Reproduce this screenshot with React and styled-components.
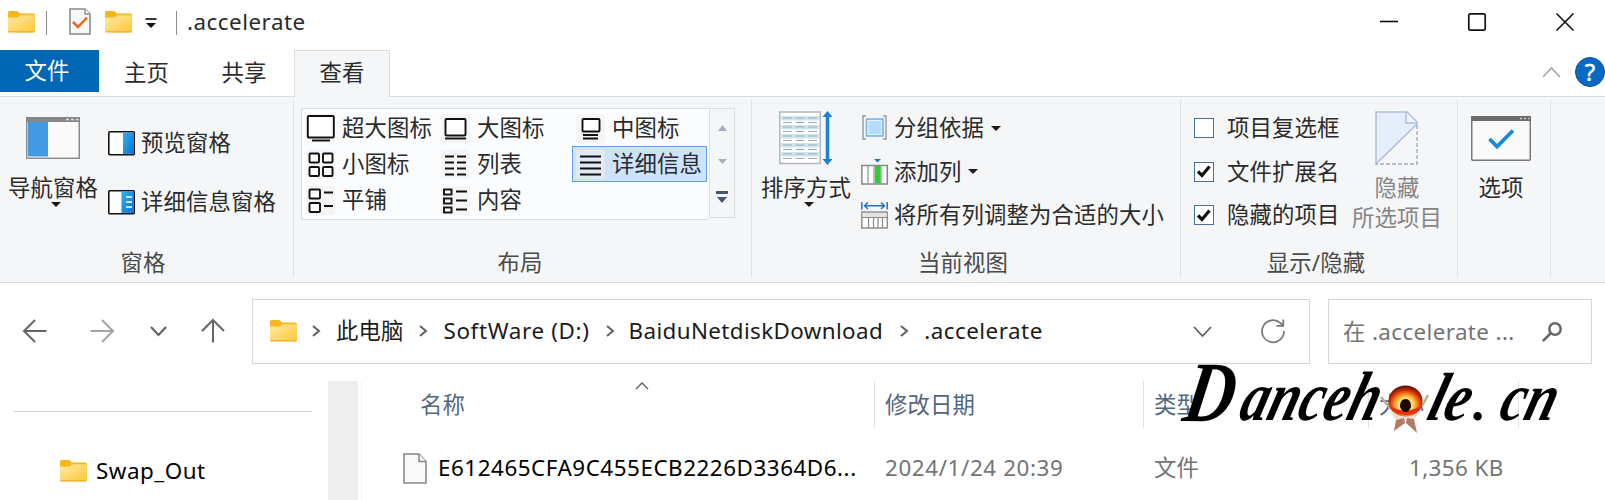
import React from 'react';
import styled, { createGlobalStyle } from 'styled-components';

const GlobalStyle = createGlobalStyle`
  * { box-sizing: border-box; }
  body { margin: 0; background: #fff; overflow: hidden; }
  svg { display: block; flex: none; overflow: visible; }
`;

const Window = styled.div`
  width: 1605px;
  height: 500px;
  overflow: hidden;
  background: #fff;
  color: #2b2b2b;
  font: 22.4px/26px 'Noto Sans', 'Noto Sans CJK SC', sans-serif;
  letter-spacing: 0.1px;
  white-space: nowrap;
`;

const Text = styled.span`
  display: block;
  flex: none;
  height: 26px;
  margin-left: ${(p) => p.$ml || 0}px;
  margin-top: ${(p) => p.$mt || 0}px;
  color: ${(p) => p.$color || 'inherit'};
  letter-spacing: ${(p) => p.$ls || 0.1}px;
`;

/* title bar */
const TitleBar = styled.header`
  display: flex;
  align-items: center;
  height: 50px;
  padding: 0 31px 7px 8px;
`;
const TitleDivider = styled.i`
  width: 1px;
  height: 24px;
  margin: 2px 0 0 ${(p) => p.$ml}px;
  background: #8b8b8b;
`;
const Controls = styled.div`
  display: flex;
  align-items: center;
  gap: 70px;
  margin-left: auto;
`;

/* tabs */
const Tabs = styled.nav`
  display: flex;
  height: 47px;
  border-bottom: 1px solid #dadcde;
`;
const Tab = styled.div`
  display: flex;
  justify-content: center;
  width: ${(p) => p.$w}px;
  height: 47px;
  padding-top: 9px;
  padding-right: ${(p) => (p.$active ? 0 : 2)}px;
  border: 1px solid ${(p) => (p.$active ? '#dadcde' : 'transparent')};
  border-bottom: 0;
  background: ${(p) => (p.$active ? '#f5f6f8' : 'transparent')};
`;
const FileTab = styled(Tab)`
  height: 42px;
  padding-top: 8px;
  border: 0;
  background: #0067b5;
  color: #fff;
`;
const TabTools = styled.div`
  display: flex;
  align-items: center;
  gap: 14px;
  height: 44px;
  margin-left: auto;
`;

/* ribbon */
const Ribbon = styled.section`
  display: flex;
  height: 186px;
  padding-top: 3px;
  background: #f5f6f8;
  border-bottom: 1px solid #d9dbdd;
`;
const Group = styled.div`
  display: flex;
  flex-direction: column;
  width: ${(p) => p.$w}px;
  height: 177px;
  border-right: 1px solid #dfe1e3;
`;
const GroupBody = styled.div`
  display: flex;
  height: 150px;
  padding-left: ${(p) => p.$pl || 0}px;
`;
const GroupLabel = styled.div`
  height: 26px;
  padding-right: ${(p) => p.$pr || 0}px;
  text-align: center;
  color: #4a4a4a;
`;
const BigButton = styled.div`
  display: flex;
  flex-direction: column;
  align-items: center;
  width: ${(p) => p.$w}px;
  padding-top: ${(p) => p.$pt}px;
  color: ${(p) => p.$color || 'inherit'};
`;
const IconSlot = styled.div`
  display: flex;
  justify-content: center;
  height: ${(p) => p.$h}px;
`;
const List = styled.div`
  display: flex;
  flex-direction: column;
  gap: ${(p) => p.$gap}px;
  padding: ${(p) => p.$pad};
`;
const Row = styled.div`
  display: flex;
  align-items: center;
  height: 26px;
  gap: ${(p) => p.$gap || 6}px;
`;
const Caret = styled.i`
  width: 0;
  height: 0;
  margin-left: 1px;
  border: 5px solid transparent;
  border-top: 5px solid #1b1b1b;
  border-bottom: 0;
`;
const ButtonCaret = styled(Caret)`
  margin: 1px 0 0 6px;
`;
const CheckBox = styled.div`
  display: grid;
  place-items: center;
  width: 20px;
  height: 20px;
  border: 1px solid #4f6ba3;
  background: #fff;
`;

/* layout gallery */
const Gallery = styled.div`
  display: flex;
  height: 112px;
  margin-top: 8px;
`;
const GalleryGrid = styled.div`
  display: grid;
  grid-template-columns: repeat(3, 135px);
  grid-auto-rows: 36px;
  width: 408px;
  padding-top: 1px;
  border: 1px solid #dcdee0;
  border-right: 0;
  background: #fbfcfe;
`;
const GalleryItem = styled.div`
  display: flex;
  align-items: center;
  gap: 7px;
  height: 36px;
  padding-left: 3px;
  border: 1px solid ${(p) => (p.$selected ? '#62a2e4' : 'transparent')};
  background: ${(p) => (p.$selected ? '#cde3fb' : 'transparent')};
`;
const IconTile = styled.div`
  flex: none;
  width: 29px;
  height: 29px;
  border-radius: 2px;
  background: ${(p) => (p.$selected ? '#e1e9f5' : '#f4f5f6')};
`;
const GalleryScroll = styled.div`
  display: flex;
  flex-direction: column;
  align-items: center;
  justify-content: space-between;
  width: 26px;
  height: 110px;
  padding: 16px 0 14px;
  border: 1px solid #dcdee0;
`;

/* address row */
const AddressRow = styled.div`
  display: flex;
  align-items: flex-start;
  height: 98px;
  padding: 16px 0 0 23px;
`;
const NavIcons = styled.div`
  display: flex;
  flex: none;
  align-items: center;
  width: 229px;
  height: 64px;
`;
const NavSlot = styled.div`
  margin-left: ${(p) => p.$ml || 0}px;
`;
const Field = styled.div`
  display: flex;
  flex: none;
  align-items: center;
  width: ${(p) => p.$w}px;
  height: 65px;
  margin-right: 18px;
  padding: 0 ${(p) => p.$pr}px ${(p) => p.$pb || 0}px ${(p) => p.$pl}px;
  border: 1px solid #d5d5d5;
`;
const Push = styled.div`
  display: flex;
  align-items: center;
  gap: 49px;
  margin-left: auto;
`;

/* content */
const Content = styled.main`
  display: flex;
  height: 119px;
`;
const Sidebar = styled.aside`
  width: 328px;
  padding: 30px 16px 0 14px;
`;
const Rule = styled.div`
  height: 1px;
  background: #d4d4d4;
`;
const TreeRow = styled.div`
  display: flex;
  align-items: center;
  height: 26px;
  padding-left: 46px;
  margin-top: 46px;
  color: #000;
`;
const Track = styled.div`
  width: 34px;
  border-right: 1px solid #f4f4f4;
  background: linear-gradient(to right, #eee 30px, #fff 30px);
`;
const Files = styled.div`
  width: 1243px;
`;
const Columns = styled.div`
  display: grid;
  grid-template-columns: 513px 269px 225px 150px;
  height: 47px;
  color: #51667f;
`;
const Column = styled.div`
  position: relative;
  padding: 11px 0 0 ${(p) => p.$pl || 10}px;
  border-right: 1px solid #e2e2e2;
`;
const SortMark = styled.div`
  position: absolute;
  left: 273px;
  top: 1px;
`;
const FileRow = styled.div`
  display: grid;
  grid-template-columns: 76px 447px 269px 248px 100px;
  align-items: center;
  height: 32px;
  margin-top: 24px;
  color: #747474;
`;
const FileIconCell = styled.div`
  padding-left: 41px;
`;
const Watermark = styled.div`
  position: absolute;
  left: 1170px;
  top: 358px;
`;

const Folder = ({ id }) => (
  <svg width="27" height="22" viewBox="0 0 27 22">
    <defs>
      <linearGradient id={id} x1="0" y1="0" x2="1" y2="1">
        <stop offset="0" stopColor="#ffe9a4" />
        <stop offset="1" stopColor="#fdc836" />
      </linearGradient>
    </defs>
    <path d="M0 1.500Q0 0 1.500 0H8.500Q9.500 0 10.200 .8L12 2.500H25.500Q27 2.500 27 4V10H0Z" fill="#f8b51c" />
    <path d="M0 6.500H9Q10.200 6.500 11 5.500L12 4.200H27V20Q27 21.500 25.500 21.500H1.500Q0 21.500 0 20Z" fill={`url(#${id})`} />
    <path d="M.5 20.800H26.500" stroke="#e9af34" strokeWidth="1.200" />
  </svg>
);

const CheckedDoc = () => (
  <svg width="22" height="27" viewBox="0 0 22 27">
    <path d="M1 1H16L21 6V26H1Z" fill="#f7f8fa" stroke="#8b8b8b" strokeWidth="1.600" />
    <path d="M16 1V6H21" fill="#fff" stroke="#8b8b8b" strokeWidth="1.300" />
    <path d="M4 14L9 19L18 9.500" fill="none" stroke="#f4611c" strokeWidth="2.500" />
  </svg>
);

const WindowPane = () => (
  <svg width="54" height="42" viewBox="0 0 54 42">
    <rect x=".75" y=".75" width="52.500" height="40.500" fill="#fafafa" stroke="#8a8d90" strokeWidth="1.500" />
    <rect width="54" height="5" fill="#85888a" />
    <path d="M40 2.500h3M45 2.500h3M50 2.500h2.500" stroke="#ddd" strokeWidth="1.500" />
    <rect x="2" y="5" width="20" height="34.500" fill="#429be2" />
  </svg>
);

const PaneIcon = ({ details }) => (
  <svg width="27" height="25" viewBox="0 0 27 25">
    <defs>
      <linearGradient id="paneBlue" x1="0" y1="0" x2="1" y2="1">
        <stop offset="0" stopColor="#2cb0ed" />
        <stop offset="1" stopColor="#0774d4" />
      </linearGradient>
    </defs>
    <rect x=".8" y=".8" width="25.400" height="22.900" rx="1" fill="#fff" stroke="#111" strokeWidth="1.600" />
    <rect x={details ? 13.5 : 15} y="1.600" width={details ? 12 : 10.500} height="21.300" fill="url(#paneBlue)" />
    {details && <path d="M18 7h6M18 12h6M18 17h6" stroke="#fff" strokeWidth="1.400" />}
  </svg>
);

const layoutArt = {
  xl: <><rect x="1.800" y="2" width="26" height="21.500" rx="1" fill="#fff" /><path d="M6 26.500H24" /></>,
  large: <><rect x="4.500" y="5" width="20" height="16.500" rx="1" fill="#fff" /><path d="M4 24.500H25" /></>,
  medium: <><rect x="6.500" y="5" width="17" height="12.500" rx="1" fill="#fff" /><path d="M7 21H22M7 24.500H22" /></>,
  small: <><rect x="3.500" y="3.500" width="9.500" height="9" rx="1" fill="#fff" /><rect x="17" y="3.500" width="9.500" height="9" rx="1" fill="#fff" /><rect x="3.500" y="17" width="9.500" height="9" rx="1" fill="#fff" /><rect x="17" y="17" width="9.500" height="9" rx="1" fill="#fff" /></>,
  list: <path d="M4 6.500h9M16 6.500h9M4 12.500h9M16 12.500h9M4 18.500h9M16 18.500h9M4 24.500h9M16 24.500h9" />,
  details: <path d="M4 6.500h21M4 12.500h21M4 18.500h21M4 24.500h21" />,
  tiles: <><rect x="3.500" y="3.500" width="10.500" height="9" rx="1" fill="#fff" /><rect x="3.500" y="17" width="10.500" height="9" rx="1" fill="#fff" /><path d="M18 6.500h9M18 20h9" /></>,
  content: <><rect x="3" y="3.500" width="7.500" height="5" fill="#fff" /><rect x="3" y="12.500" width="7.500" height="5" fill="#fff" /><rect x="3" y="21.500" width="7.500" height="5" fill="#fff" /><path d="M15 5.500h11M15 14.500h11M15 23.500h11" /></>,
};

const LayoutIcon = ({ kind }) => (
  <svg width="29" height="29" viewBox="0 0 29 29" fill="none" stroke="#111" strokeWidth="1.900">
    {layoutArt[kind]}
  </svg>
);

const SortIcon = () => (
  <svg width="54" height="54" viewBox="0 0 54 54">
    <rect x=".75" y="1" width="40.500" height="51.500" fill="#fff" stroke="#b3b7ba" strokeWidth="1.500" />
    {[5, 14, 23, 32, 41].map((y) => <rect key={y} x="2" y={y} width="38" height="4.500" fill="#cbe5f3" />)}
    {[7, 11.5, 16, 20.5, 25, 29.5, 34, 38.5, 43, 47.5].map((y) => (
      <path key={y} d={`M4 ${y}h9M16.500 ${y}h9M29 ${y}h9`} stroke="#a9acae" strokeWidth="1.200" />
    ))}
    <path d="M48.500 4V50" stroke="#1d80d3" strokeWidth="3.500" />
    <path d="M43.500 6L48.500 0L53.500 6ZM43.500 48L48.500 54L53.500 48Z" fill="#1d80d3" />
  </svg>
);

const GroupByIcon = () => (
  <svg width="27" height="26" viewBox="0 0 27 26">
    <path d="M5 1H2V24H5M22 1H25V24H22" fill="none" stroke="#96999c" strokeWidth="1.400" />
    <rect x="5.500" y="4" width="16.500" height="17" fill="#b6dcfb" stroke="#78b3e3" strokeWidth="1.500" />
    <rect x="7" y="5.500" width="13.500" height="14" fill="none" stroke="#e4f3fe" />
  </svg>
);

const AddColumnIcon = () => (
  <svg width="27" height="26" viewBox="0 0 27 26">
    <path d="M13 0H20L16.500 3.500Z" fill="#2672b5" />
    <rect x=".8" y="6.500" width="25.500" height="18.500" fill="#fff" stroke="#888" strokeWidth="1.500" />
    <path d="M7 6.500V25M13 6.500V25M20 6.500V25" stroke="#999" strokeWidth="1.300" />
    <rect x="14" y="7" width="5.500" height="17.500" fill="#25d52b" />
  </svg>
);

const FitColumnsIcon = () => (
  <svg width="27" height="27" viewBox="0 0 27 27">
    <path d="M.8 0V7.500M26.200 0V7.500M3 3.700H24M7 .5L3.500 3.700L7 7M20 .5L23.500 3.700L20 7" fill="none" stroke="#2673bb" strokeWidth="1.500" />
    <rect x=".8" y="10" width="25.400" height="16" fill="#fff" stroke="#888" strokeWidth="1.400" />
    <rect x="1.500" y="11" width="24" height="4" fill="#e2e2e2" />
    <path d="M1 15.500H26M7.500 15.500V26M12.500 15.500V26M17 15.500V26M21.500 15.500V26" stroke="#888" strokeWidth="1.200" />
  </svg>
);

const HideIcon = () => (
  <svg width="43" height="54" viewBox="0 0 43 54">
    <path d="M1 53V1H32L42 11V13Z" fill="#e5eefa" stroke="#afbed9" strokeWidth="1.500" />
    <path d="M31 1V12H42" fill="#eff4fb" stroke="#afbed9" strokeWidth="1.500" />
    <path d="M42 14V53H1" fill="none" stroke="#9eacc9" strokeWidth="1.400" strokeDasharray="4 2" />
  </svg>
);

const OptionsIcon = () => (
  <svg width="60" height="45" viewBox="0 0 60 45">
    <rect x=".75" y=".75" width="58.500" height="43.500" rx="1" fill="#fafafa" stroke="#77787a" strokeWidth="1.500" />
    <rect width="60" height="5" rx="1" fill="#6a6a6a" />
    <path d="M49 2.500h2M53 2.500h2M57 2.500h1.500" stroke="#ccc" strokeWidth="1.300" />
    <path d="M18.500 23L26 30.500L42 14.500" fill="none" stroke="#1587dc" strokeWidth="3.800" />
  </svg>
);

const Chevron = ({ dir = 'right', w, h, color = '#606060', sw = 1.6 }) => {
  const d = {
    right: `M1 1L${w - 1} ${h / 2}L1 ${h - 1}`,
    down: `M1 1L${w / 2} ${h - 1}L${w - 1} 1`,
    up: `M1 ${h - 1}L${w / 2} 1L${w - 1} ${h - 1}`,
  }[dir];
  return <svg width={w} height={h} fill="none" stroke={color} strokeWidth={sw}><path d={d} /></svg>;
};

const Arrow = ({ rotate = 0, color }) => (
  <svg width="24" height="24" viewBox="0 0 24 24" fill="none" stroke={color} strokeWidth="2" transform={`rotate(${rotate})`}>
    <path d="M12 1L1 12L12 23M1 12H23.500" />
  </svg>
);

const Emblem = () => (
  <g transform="translate(0 2)">
    <defs>
      <radialGradient id="ember" cx=".5" cy=".62" r=".62">
        <stop offset="0" stopColor="#ffe34a" />
        <stop offset=".35" stopColor="#ffe070" />
        <stop offset=".55" stopColor="#f98a1c" />
        <stop offset=".76" stopColor="#cf2a08" />
        <stop offset="1" stopColor="#4d0f05" />
      </radialGradient>
    </defs>
    <path d="M211 37L220 48L226 46M258 35L252 46L246 45" fill="none" stroke="#b4b294" strokeWidth="2.500" />
    <path d="M218 49Q235 59 252 48L244 60H226Z" fill="#f1dfd6" />
    <path d="M226 60L234 58L235 63L224 71ZM237 58L244 59L247 73L236 63Z" fill="#b57a62" />
    <ellipse cx="235.500" cy="41" rx="17" ry="15.500" fill="url(#ember)" />
    <path d="M219 45Q235 56 252 45Q251 54 236 55Q221 54 219 45Z" fill="#e33116" />
    <path d="M230 47Q230 39 235.500 39Q241 39 241 47Q239 52 235.500 52Q232 52 230 47Z" fill="#1c0602" />
  </g>
);

const layouts = [
  ['xl', '超大图标'], ['large', '大图标'], ['medium', '中图标'],
  ['small', '小图标'], ['list', '列表'], ['details', '详细信息', true],
  ['tiles', '平铺'], ['content', '内容'],
];
const toggles = [['项目复选框', false], ['文件扩展名', true], ['隐藏的项目', true]];

export default function App() {
  return (
    <Window>
      <GlobalStyle />
      <TitleBar>
        <Folder id="folderA" />
        <TitleDivider $ml={11} />
        <NavSlot $ml={22}><CheckedDoc /></NavSlot>
        <NavSlot $ml={14}><Folder id="folderB" /></NavSlot>
        <NavSlot $ml={14}>
          <svg width="10" height="10" viewBox="0 0 10 10"><path d="M-.5 2H10.500" stroke="#111" strokeWidth="1.700" /><path d="M0 6H10L5 11Z" fill="#111" /></svg>
        </NavSlot>
        <TitleDivider $ml={20} />
        <Text $ml={10} $ls={0.5}>.accelerate</Text>
        <Controls>
          <svg width="18" height="18" stroke="#111" strokeWidth="1.600"><path d="M0 8.500H18" /></svg>
          <svg width="18" height="18" stroke="#111" strokeWidth="1.700" fill="none"><rect x=".8" y=".8" width="16.400" height="16.400" rx="1.500" /></svg>
          <svg width="18" height="18" stroke="#111" strokeWidth="1.600"><path d="M.5 .5L17.500 17.500M17.500 .5L.5 17.500" /></svg>
        </Controls>
      </TitleBar>

      <Tabs>
        <FileTab $w={99}><Text $ml={-3}>文件</Text></FileTab>
        <Tab $w={97}>主页</Tab>
        <Tab $w={98}>共享</Tab>
        <Tab $w={96} $active>查看</Tab>
        <TabTools>
          <Chevron dir="up" w={19} h={11} color="#a8a8a8" />
          <svg width="30" height="30" viewBox="0 0 30 30">
            <circle cx="15" cy="15" r="14.500" fill="#0569c5" stroke="#194f86" />
            <text x="15" y="23.500" textAnchor="middle" fill="#fff" fontSize="24" stroke="#fff" strokeWidth=".5" fontFamily="Noto Sans">?</text>
          </svg>
        </TabTools>
      </Tabs>

      <Ribbon>
        <Group $w={294}>
          <GroupBody>
            <BigButton $w={106} $pt={17}>
              <IconSlot $h={58}><WindowPane /></IconSlot>
              <Text>导航窗格</Text>
              <ButtonCaret />
            </BigButton>
            <List $gap={33} $pad="30px 0 0 2px">
              <Row><PaneIcon /><Text>预览窗格</Text></Row>
              <Row><PaneIcon details /><Text>详细信息窗格</Text></Row>
            </List>
          </GroupBody>
          <GroupLabel $pr={7}>窗格</GroupLabel>
        </Group>

        <Group $w={458}>
          <GroupBody $pl={7}>
            <Gallery>
              <GalleryGrid>
                {layouts.map(([kind, name, selected]) => (
                  <GalleryItem key={kind} $selected={selected}>
                    <IconTile $selected={selected}><LayoutIcon kind={kind} /></IconTile>
                    <Text>{name}</Text>
                  </GalleryItem>
                ))}
              </GalleryGrid>
              <GalleryScroll>
                <svg width="9" height="6"><path d="M0 6L4.500 0L9 6Z" fill="#a5b0bd" /></svg>
                <svg width="9" height="5"><path d="M0 0H9L4.500 5Z" fill="#a5b0bd" /></svg>
                <svg width="12" height="12"><path d="M0 0H12V3H0ZM1 6H11L6 12Z" fill="#425773" /></svg>
              </GalleryScroll>
            </Gallery>
          </GroupBody>
          <GroupLabel $pr={5}>布局</GroupLabel>
        </Group>

        <Group $w={429}>
          <GroupBody>
            <BigButton $w={108} $pt={11}>
              <IconSlot $h={64}><SortIcon /></IconSlot>
              <Text>排序方式</Text>
              <ButtonCaret />
            </BigButton>
            <List $gap={17.5} $pad="15px 0 0 1px">
              <Row><GroupByIcon /><Text>分组依据</Text><Caret /></Row>
              <Row><AddColumnIcon /><Text>添加列</Text><Caret /></Row>
              <Row><FitColumnsIcon /><Text>将所有列调整为合适的大小</Text></Row>
            </List>
          </GroupBody>
          <GroupLabel $pr={6}>当前视图</GroupLabel>
        </Group>

        <Group $w={277}>
          <GroupBody>
            <List $gap={17.5} $pad="15px 0 0 13px">
              {toggles.map(([name, on]) => (
                <Row key={name} $gap={13}>
                  <CheckBox>{on && <svg width="14" height="13" viewBox="0 0 14 13"><path d="M1 6.500L5 10.500L12.500 1.500" fill="none" stroke="#111" strokeWidth="3.200" /></svg>}</CheckBox>
                  <Text>{name}</Text>
                </Row>
              ))}
            </List>
            <BigButton $w={115} $pt={11} $color="#858585">
              <IconSlot $h={64}><HideIcon /></IconSlot>
              <Text>隐藏</Text>
              <Text $mt={4}>所选项目</Text>
            </BigButton>
          </GroupBody>
          <GroupLabel $pr={6}>显示/隐藏</GroupLabel>
        </Group>

        <Group $w={93}>
          <BigButton $w={86} $pt={16}>
            <IconSlot $h={59}><OptionsIcon /></IconSlot>
            <Text>选项</Text>
          </BigButton>
        </Group>
      </Ribbon>

      <AddressRow>
        <NavIcons>
          <Arrow color="#666" />
          <NavSlot $ml={43}><Arrow color="#a3a3a3" rotate={180} /></NavSlot>
          <NavSlot $ml={36}><Chevron dir="down" w={17} h={10} sw={2} /></NavSlot>
          <NavSlot $ml={34}><Arrow color="#666" rotate={90} /></NavSlot>
        </NavIcons>
        <Field $w={1058} $pl={17} $pr={24} $pb={1}>
          <Folder id="folderC" />
          <NavSlot $ml={15}><Chevron w={8} h={12} sw={2} /></NavSlot>
          <Text $ml={16} $color="#1b1b1b">此电脑</Text>
          <NavSlot $ml={16}><Chevron w={8} h={12} sw={2} /></NavSlot>
          <Text $ml={16} $ls={0.65} $color="#1b1b1b">SoftWare (D:)</Text>
          <NavSlot $ml={16}><Chevron w={8} h={12} sw={2} /></NavSlot>
          <Text $ml={15} $ls={0.38} $color="#1b1b1b">BaiduNetdiskDownload</Text>
          <NavSlot $ml={17}><Chevron w={8} h={12} sw={2} /></NavSlot>
          <Text $ml={16} $ls={0.5} $color="#1b1b1b">.accelerate</Text>
          <Push>
            <Chevron dir="down" w={19} h={11} sw={1.8} />
            <svg width="24" height="24" viewBox="0 0 24 24" fill="none" stroke="#777" strokeWidth="1.700">
              <path d="M23 12A11 11 0 1 1 19.500 4.200L22 6.500M22.300 .5V6.800H15.500" />
            </svg>
          </Push>
        </Field>
        <Field $w={264} $pl={14} $pr={29}>
          <Text $color="#747474" $ls={0.38}>在 .accelerate ...</Text>
          <Push>
            <svg width="20" height="20" viewBox="0 0 20 20" fill="none" stroke="#666" strokeWidth="2.500">
              <circle cx="13" cy="7" r="5.700" /><path d="M9 11L.8 19.200" />
            </svg>
          </Push>
        </Field>
      </AddressRow>

      <Content>
        <Sidebar>
          <Rule />
          <TreeRow><Folder id="folderD" /><Text $ml={9} $ls={0.5}>Swap_Out</Text></TreeRow>
        </Sidebar>
        <Track />
        <Files>
          <Columns>
            <Column $pl={58}>名称<SortMark><Chevron dir="up" w={14} h={8} sw={1.4} /></SortMark></Column>
            <Column>修改日期</Column>
            <Column>类型</Column>
            <Column>大小</Column>
          </Columns>
          <FileRow>
            <FileIconCell>
              <svg width="24" height="31" viewBox="0 0 24 31" fill="#fafafa" stroke="#858585" strokeWidth="1.500">
                <path d="M1 1H16L23 8.500V30H1Z" /><path d="M16 1V8.500H23" />
              </svg>
            </FileIconCell>
            <Text $color="#000" $ls={0.54}>E612465CFA9C455ECB2226D3364D6...</Text>
            <Text $ls={0.6}>2024/1/24 20:39</Text>
            <Text>文件</Text>
            <Text $ml={7} $ls={0.4}>1,356 KB</Text>
          </FileRow>
        </Files>
      </Content>

      <Watermark>
        <svg width="400" height="80" viewBox="0 0 400 80" fontFamily="Liberation Serif" fontStyle="italic" fontWeight="700" fill="#000">
          <text transform="translate(11 63) skewX(-10)" fontSize="86" textLength="50" lengthAdjust="spacingAndGlyphs">D</text>
          <text transform="translate(67 62) skewX(-16)" fontSize="70" textLength="138" lengthAdjust="spacingAndGlyphs">anceh</text>
          <text transform="translate(255 62) skewX(-16)" fontSize="68" textLength="41" lengthAdjust="spacingAndGlyphs">le</text>
          <text x="303" y="62" fontSize="52">.</text>
          <text transform="translate(327 62) skewX(-16)" fontSize="68" textLength="55" lengthAdjust="spacingAndGlyphs">cn</text>
          <Emblem />
        </svg>
      </Watermark>
    </Window>
  );
}
